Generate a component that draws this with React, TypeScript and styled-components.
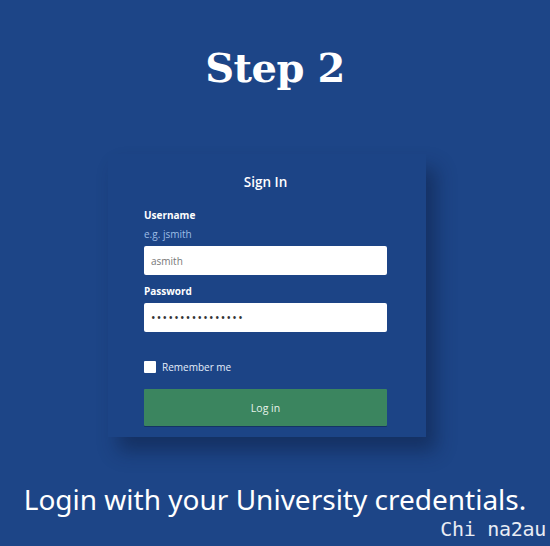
import styled, { createGlobalStyle } from "styled-components";

const GlobalStyle = createGlobalStyle`
  html, body {
    margin: 0;
    padding: 0;
    background: #1d4587;
  }
`;

const App = () => {
  return (
    <StyledPage>
      <GlobalStyle />
      <StyledTitle>Step 2</StyledTitle>
      <StyledCard>
        <StyledCardTitle>Sign In</StyledCardTitle>
        <StyledLabel>Username</StyledLabel>
        <StyledHint>e.g. jsmith</StyledHint>
        <StyledInput>asmith</StyledInput>
        <StyledLabel $top={9}>Password</StyledLabel>
        <StyledInput $password>••••••••••••••••</StyledInput>
        <StyledCheckRow>
          <StyledCheckbox />
          <span>Remember me</span>
        </StyledCheckRow>
        <StyledButton>Log in</StyledButton>
      </StyledCard>
      <StyledCaption>Login with your University credentials.</StyledCaption>
      <StyledWatermark>Chi na2au</StyledWatermark>
    </StyledPage>
  );
};

export default App;

const StyledPage = styled.div`
  width: 550px;
  height: 546px;
  background: #1d4587;
  display: flex;
  flex-direction: column;
  align-items: center;
  overflow: hidden;
`;

const StyledTitle = styled.h1`
  margin: 39px 0 0;
  color: #fff;
  font-family: "DejaVu Serif", serif;
  font-size: 40px;
  font-weight: 700;
  line-height: 58px;
  letter-spacing: -0.5px;
`;

const StyledCard = styled.div`
  margin: 57px 0 0 -16px;
  width: 318px;
  height: 283px;
  box-sizing: border-box;
  padding: 20px 39px 0 36px;
  background: #1c4486;
  box-shadow: 10px 14px 18px rgba(10, 25, 55, 0.45);
  display: flex;
  flex-direction: column;
  font-family: "Open Sans", sans-serif;
  color: #fff;
`;

const StyledCardTitle = styled.div`
  text-align: center;
  font-size: 13.5px;
  font-weight: 600;
  line-height: 16px;
  margin-bottom: 18px;
`;

const StyledLabel = styled.div<{ $top?: number }>`
  font-size: 10px;
  font-weight: 700;
  line-height: 14px;
  margin-top: ${(p) => p.$top ?? 0}px;
`;

const StyledHint = styled.div`
  font-size: 10px;
  color: #9dbde6;
  line-height: 14px;
  margin-top: 5px;
`;

const StyledInput = styled.div<{ $password?: boolean }>`
  height: 29px;
  box-sizing: border-box;
  background: #fff;
  border-radius: 2px;
  padding: 0 7px;
  display: flex;
  align-items: center;
  color: ${(p) => (p.$password ? "#333" : "#777")};
  font-size: ${(p) => (p.$password ? "12px" : "10px")};
  letter-spacing: ${(p) => (p.$password ? "1.3px" : "0")};
  margin-top: 5px;
`;

const StyledCheckRow = styled.div`
  display: flex;
  align-items: center;
  gap: 6px;
  margin-top: 29px;
  font-size: 10px;
  line-height: 12px;
  color: #e6eefa;
`;

const StyledCheckbox = styled.div`
  width: 12px;
  height: 12px;
  background: #fff;
  border-radius: 1px;
`;

const StyledButton = styled.div`
  margin-top: 16px;
  height: 37px;
  background: #3b855f;
  border-radius: 1px;
  display: flex;
  align-items: center;
  justify-content: center;
  font-size: 10.5px;
  color: #e6f2ea;
  box-shadow: 0 1px 0 rgba(0, 0, 0, 0.25);
`;

const StyledCaption = styled.div`
  margin-top: 44px;
  color: #fff;
  font-family: "Noto Sans", sans-serif;
  font-size: 28px;
  line-height: 36px;
`;

const StyledWatermark = styled.div`
  align-self: flex-end;
  margin-right: 4px;
  color: #e8ecf4;
  font-family: "DejaVu Sans Mono", monospace;
  font-size: 20px;
  line-height: 24px;
  letter-spacing: -0.3px;
`;
